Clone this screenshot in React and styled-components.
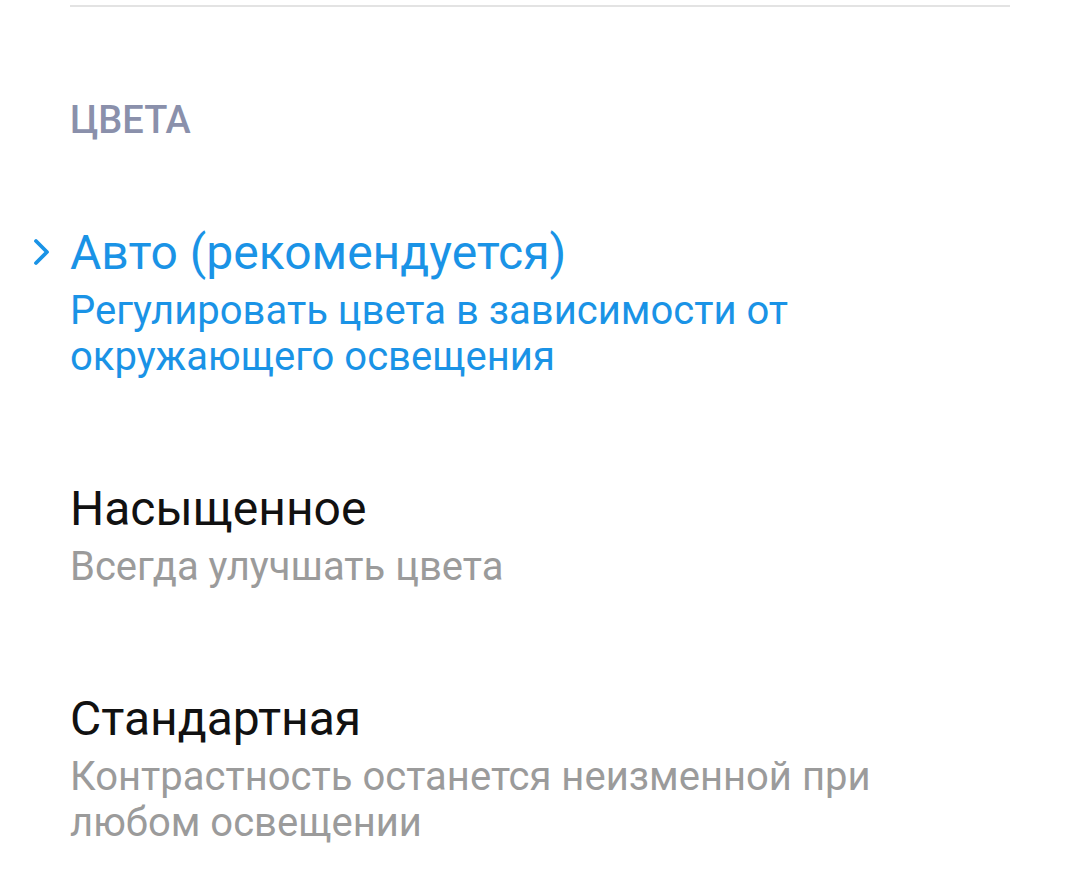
import React from "react";
import styled, { createGlobalStyle } from "styled-components";

const Global = createGlobalStyle`
  html, body { margin: 0; padding: 0; background: #ffffff; }
  body { font-family: Roboto, "Noto Sans", sans-serif; -webkit-font-smoothing: antialiased; }
`;

const Page = styled.div`
  width: 1080px;
  min-height: 892px;
  background: #fff;
  display: grid;
  grid-template-columns: 70px 1fr 70px;
  align-content: start;
`;

const Divider = styled.div`
  grid-column: 2;
  margin-top: 5px;
  height: 2px;
  background: #e3e3e3;
`;

const SectionHeader = styled.div`
  grid-column: 2;
  margin-top: 93px;
  height: 40px;
  line-height: 40px;
  font-size: 38px;
  font-weight: 500;
  color: #8a90ab;
`;

const Marker = styled.div`
  grid-column: 1;
  margin-top: ${(p) => p.$top}px;
  display: flex;
  justify-content: flex-end;
  align-items: flex-start;
  padding-right: 20px;
  padding-top: 9px;
  color: #1a93e6;
`;

const Option = styled.div`
  grid-column: 2;
  margin-top: ${(p) => p.$top}px;
  display: flex;
  flex-direction: column;
  gap: 10px;
`;

const Title = styled.div`
  font-size: 48px;
  line-height: 50px;
  color: ${(p) => (p.$active ? "#1a93e6" : "#111111")};
`;

const Subtitle = styled.div`
  font-size: 40px;
  line-height: 46px;
  max-width: 860px;
  color: ${(p) => (p.$active ? "#1a93e6" : "#9b9b9b")};
`;

const Chevron = () => (
  <svg width="18" height="30" viewBox="0 0 18 30" fill="none">
    <path d="M4 4 L15 15 L4 26" stroke="currentColor" strokeWidth="3.8" strokeLinecap="round" strokeLinejoin="round" />
  </svg>
);

const options = [
  {
    title: "Авто (рекомендуется)",
    sub: ["Регулировать цвета в зависимости от", "окружающего освещения"],
    active: true,
    top: 88,
  },
  { title: "Насыщенное", sub: ["Всегда улучшать цвета"], top: 104 },
  {
    title: "Стандартная",
    sub: ["Контрастность останется неизменной при", "любом освещении"],
    top: 104,
  },
];

export default function App() {
  return (
    <>
      <Global />
      <Page>
        <Divider />
        <SectionHeader>ЦВЕТА</SectionHeader>
        {options.map((o) => (
          <React.Fragment key={o.title}>
            {o.active && (
              <Marker $top={o.top}>
                <Chevron />
              </Marker>
            )}
            <Option $top={o.top}>
              <Title $active={o.active}>{o.title}</Title>
              <Subtitle $active={o.active}>
                {o.sub.map((l) => (
                  <div key={l}>{l}</div>
                ))}
              </Subtitle>
            </Option>
          </React.Fragment>
        ))}
      </Page>
    </>
  );
}
